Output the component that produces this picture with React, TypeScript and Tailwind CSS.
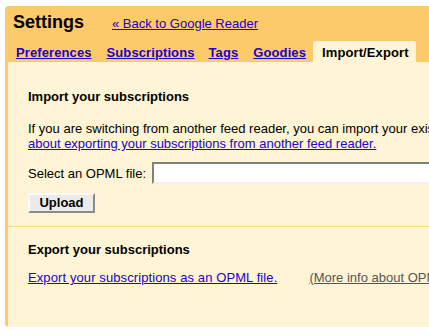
import React from "react";

const font = { fontFamily: '"Liberation Sans", Arial, sans-serif' };

export default function App() {
  return (
    <div className="w-[429px] h-[336px] overflow-hidden bg-white text-[13px] text-black" style={font}>
      <div className="mt-[6px] ml-[5px] w-[700px] bg-[#fdca6b] rounded-tl-[4px] rounded-bl-[4px]">
        <div className="flex items-baseline pl-[8px] pt-[5px] h-[35px]">
          <span className="text-[18px] font-bold leading-[22px]">Settings</span>
          <a href="#" className="ml-[28px] text-[#2200cc] underline leading-[22px]">« Back to Google Reader</a>
        </div>
        <div className="flex pl-[3px] font-bold leading-[15px] tracking-[0.1px]">
          <a href="#" className="px-[8px] pt-[4px] pb-[2px] text-[#2200cc] underline">Preferences</a>
          <a href="#" className="pl-[7px] pr-[6px] pt-[4px] pb-[2px] text-[#2200cc] underline">Subscriptions</a>
          <a href="#" className="pl-[8px] pr-[7px] pt-[4px] pb-[2px] text-[#2200cc] underline">Tags</a>
          <a href="#" className="pl-[8px] pr-[7px] pt-[4px] pb-[2px] text-[#2200cc] underline">Goodies</a>
          <div className="pl-[9px] pr-[7px] pt-[4px] pb-[2px] bg-[#fff4d6] rounded-t-[2px]">Import/Export</div>
        </div>
        <div className="ml-[3px] mb-[3px] bg-[#fff4d6] leading-[15px]">
          <div className="pl-[20px] pt-[27px] pb-[13px] border-b border-[#f8d98a]">
            <div className="font-bold">Import your subscriptions</div>
            <p className="mt-[17px] whitespace-nowrap">
              If you are switching from another feed reader, you can import your existing subscriptions. Learn more
              <br />
              <a href="#" className="text-[#2200cc] underline">about exporting your subscriptions from another feed reader.</a>
            </p>
            <div className="mt-[11px] flex items-center">
              <span>Select an OPML file:</span>
              <div className="ml-[6px] w-[400px] h-[22px] bg-white border-2 border-t-[#808080] border-l-[#808080] border-b-[#f0f0f0] border-r-[#f0f0f0]" />
            </div>
            <button className="mt-[9px] w-[67px] h-[20px] bg-[#ebebeb] font-bold border-2 border-t-[#fafafa] border-l-[#fafafa] border-b-[#8a8a8a] border-r-[#8a8a8a] leading-[14px]">
              Upload
            </button>
          </div>
          <div className="pl-[20px] pt-[15px] pb-[42px]">
            <div className="font-bold">Export your subscriptions</div>
            <div className="mt-[13px] flex whitespace-nowrap">
              <a href="#" className="text-[#2200cc] underline tracking-[0.1px]">Export your subscriptions as an OPML file.</a>
              <a href="#" className="ml-[32px] text-[#555555] underline">(More info about OPML)</a>
            </div>
          </div>
        </div>
      </div>
    </div>
  );
}
